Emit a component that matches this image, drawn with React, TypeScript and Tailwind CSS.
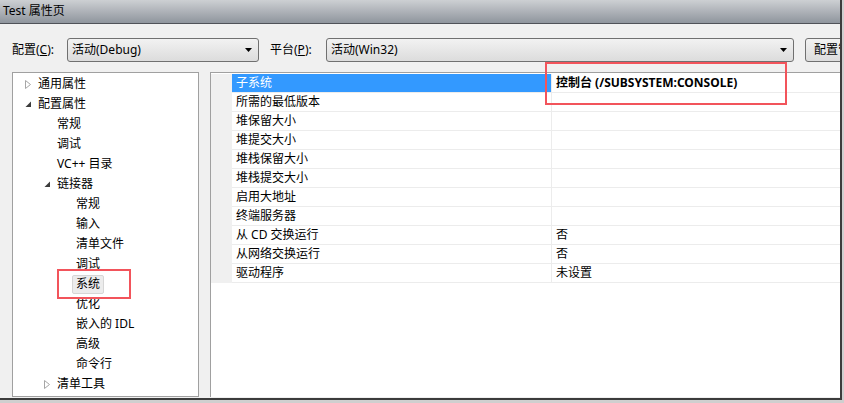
import React from "react";

type TreeNode = {
  label: string;
  level: 0 | 1 | 2;
  toggle?: "open" | "closed";
  selected?: boolean;
};

const tree: TreeNode[] = [
  { label: "通用属性", level: 0, toggle: "closed" },
  { label: "配置属性", level: 0, toggle: "open" },
  { label: "常规", level: 1 },
  { label: "调试", level: 1 },
  { label: "VC++ 目录", level: 1 },
  { label: "链接器", level: 1, toggle: "open" },
  { label: "常规", level: 2 },
  { label: "输入", level: 2 },
  { label: "清单文件", level: 2 },
  { label: "调试", level: 2 },
  { label: "系统", level: 2, selected: true },
  { label: "优化", level: 2 },
  { label: "嵌入的 IDL", level: 2 },
  { label: "高级", level: 2 },
  { label: "命令行", level: 2 },
  { label: "清单工具", level: 1, toggle: "closed" },
];

const indent = ["pl-[12px]", "pl-[31px]", "pl-[50px]"];

const props: { name: string; value?: string }[] = [
  { name: "子系统", value: "控制台 (/SUBSYSTEM:CONSOLE)" },
  { name: "所需的最低版本" },
  { name: "堆保留大小" },
  { name: "堆提交大小" },
  { name: "堆栈保留大小" },
  { name: "堆栈提交大小" },
  { name: "启用大地址" },
  { name: "终端服务器" },
  { name: "从 CD 交换运行", value: "否" },
  { name: "从网络交换运行", value: "否" },
  { name: "驱动程序", value: "未设置" },
];

const Toggle = ({ state }: { state?: "open" | "closed" }) => {
  if (state === "closed")
    return (
      <svg width="7" height="9" viewBox="0 0 7 9">
        <polygon points="0.5,0.5 5.5,4.5 0.5,8.5" fill="#fff" stroke="#a6a6a6" />
      </svg>
    );
  if (state === "open")
    return (
      <svg width="7" height="7" viewBox="0 0 7 7">
        <polygon points="6,0.5 6,6 0.5,6" fill="#3c3c3c" />
      </svg>
    );
  return null;
};

const DropArrow = () => (
  <svg width="7" height="4" viewBox="0 0 7 4">
    <polygon points="0,0 7,0 3.5,4" fill="#000" />
  </svg>
);

const Combo = ({ text, width }: { text: string; width: string }) => (
  <div
    className={`${width} shrink-0 h-[24px] flex items-center justify-between pl-[4px] pr-[6px] rounded-[3px] border border-[#707070] bg-gradient-to-b from-[#f2f2f2] to-[#dcdcdc]`}
  >
    <span>{text}</span>
    <DropArrow />
  </div>
);

export default function App() {
  return (
    <div className="relative w-[844px] h-[403px] bg-[#cfcfcf] overflow-hidden text-[12px] text-black font-['Noto_Sans','Noto_Sans_CJK_SC',sans-serif]">
      <div className="w-[842px] h-[400px] flex flex-col bg-[#f0f0f0] border-r-2 border-b-2 border-[#3c3c3c] overflow-hidden">
        {/* glass title bar */}
        <div className="h-[24px] shrink-0 flex items-center pl-[3px] pb-[1px] border-b border-[#4f5258] bg-gradient-to-b from-[#cdd0d3] via-[#aeb2b8] to-[#8f959d]">
          <span className="leading-none">Test 属性页</span>
        </div>

        {/* configuration / platform row */}
        <div className="flex items-center pt-[14px] pl-[12px] h-[38px] shrink-0 overflow-hidden">
          <span className="w-[55px] shrink-0">
            配置(<span className="underline">C</span>):
          </span>
          <Combo text="活动(Debug)" width="w-[192px]" />
          <span className="ml-[11px] w-[56px] shrink-0">
            平台(<span className="underline">P</span>):
          </span>
          <Combo text="活动(Win32)" width="w-[468px]" />
          <div className="ml-[11px] w-[80px] shrink-0 h-[24px] flex items-center pl-[8px] rounded-[3px] border border-[#707070] bg-gradient-to-b from-[#f2f2f2] to-[#dcdcdc] whitespace-nowrap">
            配置管理器
          </div>
        </div>

        <div className="flex flex-1 min-h-0 pt-[10px] pl-[12px] pb-[1px] gap-[11px]">
          {/* tree */}
          <div className="w-[187px] shrink-0 bg-white border border-[#a0a0a0] pt-[1px]">
            {tree.map((node, i) => (
              <div key={i} className={`h-[20px] flex items-center ${indent[node.level]}`}>
                <div className="w-[13px] flex items-center">
                  <Toggle state={node.toggle} />
                </div>
                {node.selected ? (
                  <span className="-ml-[4px] h-[19px] flex items-center px-[3px] rounded-[2px] border border-[#d6d6d6] bg-[#ececec]">
                    {node.label}
                  </span>
                ) : (
                  <span>{node.label}</span>
                )}
              </div>
            ))}
          </div>

          {/* property grid */}
          <div className="flex-1 bg-white border-t border-l border-[#a0a0a0] pt-[1px]">
            {props.map((p, i) => (
              <div key={i} className="flex h-[19px]">
                <div className="w-[21px] shrink-0 bg-[#f0f0f0]" />
                <div
                  className={`w-[320px] shrink-0 flex items-center pl-[4px] border-b border-r border-[#ececec] ${
                    i === 0 ? "bg-[#3399ff] text-white" : ""
                  }`}
                >
                  {p.name}
                </div>
                <div
                  className={`flex-1 flex items-center pl-[4px] border-b border-[#ececec] ${
                    i === 0 ? "font-bold" : ""
                  }`}
                >
                  {p.value}
                </div>
              </div>
            ))}
          </div>
        </div>
      </div>

      {/* red callouts */}
      <div className="absolute left-[545px] top-[62px] w-[242px] h-[43px] border-2 border-[#f2545b]" />
      <div className="absolute left-[57px] top-[269px] w-[74px] h-[30px] border-2 border-[#f2545b]" />
    </div>
  );
}
